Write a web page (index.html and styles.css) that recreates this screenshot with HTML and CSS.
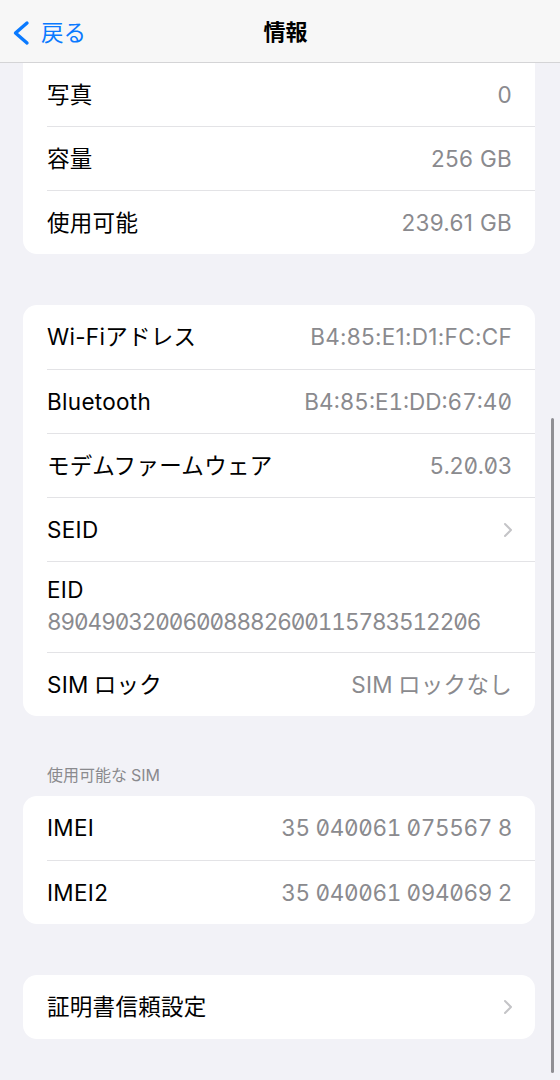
FILE: index.html
```html
<!DOCTYPE html>
<html lang="ja">
<head>
<meta charset="utf-8">
<link rel="stylesheet" href="styles.css">
</head>
<body>
<header class="nav">
  <div class="back">
    <svg class="back-icon" width="20" height="26" viewBox="0 0 20 26"><polyline points="16,3 4.5,13 16,23" fill="none" stroke="#0a7aff" stroke-width="3.4" stroke-linecap="round" stroke-linejoin="round"/></svg>
    <span class="back-text">戻る</span>
  </div>
  <div class="title">情報</div>
</header>

<main class="content">
  <section class="card card-top">
    <div class="row row-first"><span class="label">写真</span><span class="value">0</span></div>
    <div class="row"><span class="label">容量</span><span class="value">256 GB</span></div>
    <div class="row"><span class="label">使用可能</span><span class="value">239.61 GB</span></div>
  </section>

  <section class="card gap">
    <div class="row"><span class="label">Wi-Fiアドレス</span><span class="value">B4:85:E1:D1:FC:CF</span></div>
    <div class="row"><span class="label">Bluetooth</span><span class="value mono mac">B4:85:E1:DD:67:40</span></div>
    <div class="row"><span class="label">モデムファームウェア</span><span class="value mono">5.20.03</span></div>
    <div class="row"><span class="label">SEID</span><svg class="chev" width="10" height="16" viewBox="0 0 10 16"><polyline points="2,2 8,8 2,14" fill="none" stroke="#c4c4c7" stroke-width="2" stroke-linecap="round" stroke-linejoin="round"/></svg></div>
    <div class="row row-stack"><span class="label">EID</span><span class="value mono eid">89049032006008882600115783512206</span></div>
    <div class="row"><span class="label"><span class="sp">SIM</span>ロック</span><span class="value"><span class="sp">SIM</span>ロックなし</span></div>
  </section>

  <div class="section-header">使用可能な<span class="sp-l">SIM</span></div>
  <section class="card">
    <div class="row"><span class="label">IMEI</span><span class="value mono">35 040061 075567 8</span></div>
    <div class="row"><span class="label">IMEI2</span><span class="value mono">35 040061 094069 2</span></div>
  </section>

  <section class="card gap">
    <div class="row"><span class="label">証明書信頼設定</span><svg class="chev" width="10" height="16" viewBox="0 0 10 16"><polyline points="2,2 8,8 2,14" fill="none" stroke="#c4c4c7" stroke-width="2" stroke-linecap="round" stroke-linejoin="round"/></svg></div>
  </section>
</main>

<div class="scrollbar"></div>
</body>
</html>
```

FILE: styles.css
```css
* { box-sizing: border-box; }
html, body {
  margin: 0;
  padding: 0;
  background: #f2f2f7;
  font-family: "Inter", "Noto Sans CJK JP", sans-serif;
  color: #000;
  height: 1080px;
  overflow: hidden;
}
.nav {
  height: 63px;
  background: #f7f7f7;
  border-bottom: 1px solid #d4d4d6;
  display: grid;
  grid-template-columns: 1fr auto 1fr;
  align-items: center;
  padding: 0 0 0 11px;
}
.back {
  display: flex;
  align-items: center;
  gap: 10px;
  color: #0a7aff;
  padding-top: 3px;
}
.back-icon { display: block; }
.back-text {
  font-size: 22.5px;
  line-height: 28px;
}
.title {
  font-size: 22px;
  font-weight: 700;
  line-height: 28px;
  padding-top: 2px;
}
.content {
  padding: 0 25px 0 23px;
}
.card {
  background: #fff;
  border-radius: 14px;
  overflow: hidden;
}
.card-top {
  border-top-left-radius: 0;
  border-top-right-radius: 0;
}
.gap { margin-top: 51px; }
.row {
  height: 64px;
  margin-left: 24px;
  padding-right: 23px;
  display: flex;
  align-items: center;
  justify-content: space-between;
  border-top: 1px solid #e3e3e6;
}
.row:first-child { border-top: none; }
.row-first { height: 63px; }
.label {
  font-size: 22.5px;
  line-height: 28px;
  letter-spacing: 0.3px;
}
.value {
  font-size: 22.5px;
  line-height: 28px;
  letter-spacing: 0.3px;
  color: #8a8a8e;
}
.mono {
  font-feature-settings: "tnum" 1, "zero" 1;
  letter-spacing: -0.35px;
}
.mac { letter-spacing: 0; }
.eid {
  letter-spacing: -1.05px;
}
.sp { margin-right: 5px; }
.sp-l { margin-left: 4px; }
.row-stack {
  height: 91px;
  flex-direction: column;
  align-items: flex-start;
  justify-content: flex-start;
  gap: 4px;
  padding-top: 14px;
}
.chev { display: block; margin-right: -1px; }
.section-header {
  font-size: 16px;
  line-height: 20px;
  color: #8a8a8e;
  padding: 49px 0 11px 24px;
}
.scrollbar {
  position: fixed;
  right: 6px;
  top: 418px;
  width: 3px;
  height: 655px;
  border-radius: 2px;
  background: #8f8f94;
}
```
